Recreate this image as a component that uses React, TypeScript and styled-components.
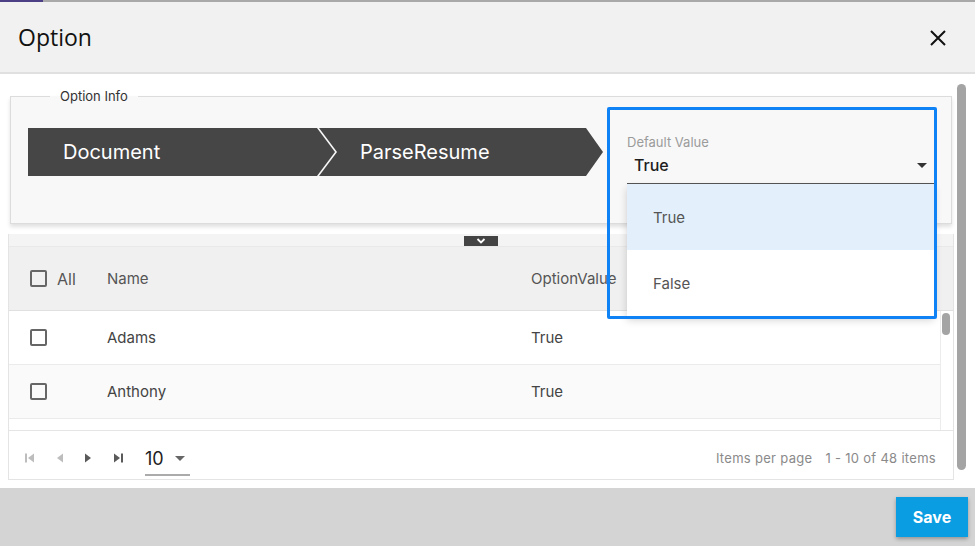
import { FC } from 'react';
import styled, { createGlobalStyle } from 'styled-components';

const GlobalStyle = createGlobalStyle`
  body {
    margin: 0;
    background: #ffffff;
    font-family: Inter, 'Open Sans', 'Liberation Sans', sans-serif;
  }
  * {
    box-sizing: border-box;
  }
`;

const Page = styled.div`
  width: 975px;
  height: 546px;
  display: flex;
  flex-direction: column;
  overflow: hidden;
`;

const TopLine = styled.div`
  height: 2px;
  flex-shrink: 0;
  background: linear-gradient(to right, #4d3f86 0 43px, #a9a9a9 43px);
`;

const Header = styled.div`
  height: 72px;
  flex-shrink: 0;
  display: flex;
  align-items: center;
  justify-content: space-between;
  padding: 0 28px 0 18px;
  background: #f1f1f1;
  border-bottom: 2px solid #e0e0e0;
`;

const Title = styled.div`
  font-family: 'Open Sans', sans-serif;
  font-size: 23px;
  color: #111;
`;

const CloseIcon = styled.svg`
  width: 18px;
  height: 18px;
  margin-top: 2px;
`;

const Body = styled.div`
  flex: 1;
  display: flex;
  min-height: 0;
`;

const Main = styled.div`
  flex: 1;
  display: flex;
  flex-direction: column;
  padding: 13px 0 0 8px;
`;

const OuterScroll = styled.div`
  width: 21px;
  flex-shrink: 0;
  padding: 10px 0 0 3px;
`;

const OuterThumb = styled.div`
  width: 9px;
  height: 386px;
  border-radius: 5px;
  background: #a4a4a4;
`;

const InfoSet = styled.fieldset`
  margin: 0 2px 0 2px;
  padding: 0 0 0 17px;
  border: 1px solid #dcdcdc;
  background: #f8f8f8;
  box-shadow: 0 3px 4px rgba(0, 0, 0, 0.12);
`;

const InfoLegend = styled.legend`
  margin-left: 22px;
  padding: 0 10px;
  font-size: 13px;
  line-height: 18px;
  color: #333;
`;

const InfoRow = styled.div`
  display: flex;
  align-items: flex-start;
  margin: 23px 0 39px;
`;

const Crumbs = styled.div`
  display: flex;
  height: 48px;
`;

const Crumb = styled.div<{ $first?: boolean; $width: number; $pad: number }>`
  width: ${p => p.$width}px;
  height: 48px;
  display: flex;
  align-items: center;
  padding-left: ${p => p.$pad}px;
  margin-left: ${p => (p.$first ? 0 : -16)}px;
  background: #464646;
  color: #fff;
  font-size: 20px;
  font-weight: 400;
  clip-path: ${p =>
    p.$first
      ? 'polygon(0 0, calc(100% - 18px) 0, 100% 50%, calc(100% - 18px) 100%, 0 100%)'
      : 'polygon(0 0, calc(100% - 17px) 0, 100% 50%, calc(100% - 17px) 100%, 0 100%, 18px 50%)'};
`;

const Field = styled.div`
  position: relative;
  width: 307px;
  margin: 6px 0 0 24px;
`;

const FieldLabel = styled.div`
  font-size: 13px;
  line-height: 16px;
  color: #9b9b9b;
`;

const FieldValue = styled.div`
  display: flex;
  align-items: center;
  justify-content: space-between;
  margin-top: 4px;
  padding: 0 7px 7px 7px;
  border-bottom: 1px solid #555;
  font-size: 16px;
  line-height: 22px;
  font-weight: 500;
  color: #1e1e1e;
`;

const Caret = styled.span<{ $color?: string }>`
  width: 0;
  height: 0;
  border-left: 5px solid transparent;
  border-right: 5px solid transparent;
  border-top: 5px solid ${p => p.$color || '#333'};
`;

const Popup = styled.div`
  position: absolute;
  top: 100%;
  left: 0;
  right: 0;
  background: #fff;
  box-shadow: 0 4px 8px rgba(0, 0, 0, 0.18);
  z-index: 2;
`;

const PopupItem = styled.div<{ $active?: boolean }>`
  height: 66px;
  display: flex;
  align-items: center;
  padding-left: 26px;
  font-size: 15px;
  color: #555;
  background: ${p => (p.$active ? '#e3f0fb' : '#fff')};
`;

const Highlight = styled.div`
  position: absolute;
  top: -27px;
  left: -20px;
  width: 330px;
  height: 212px;
  border: 3px solid #0f83f6;
  border-radius: 2px;
  pointer-events: none;
  z-index: 3;
`;

const Grid = styled.div`
  margin-top: 10px;
  height: 246px;
  display: flex;
  flex-direction: column;
  border: 1px solid #e4e4e4;
  border-top: none;
`;

const GroupStrip = styled.div`
  height: 13px;
  display: flex;
  justify-content: center;
  align-items: flex-end;
  background: #f4f4f4;
  border-bottom: 1px solid #e9e9e9;
`;

const ToggleTab = styled.div`
  width: 34px;
  height: 10px;
  display: flex;
  align-items: center;
  justify-content: center;
  background: #444;
`;

const Cols = styled.div`
  display: grid;
  grid-template-columns: 98px 424px 1fr;
  align-items: center;
`;

const HeaderRow = styled(Cols)`
  height: 64px;
  background: #f0f0f0;
  border-bottom: 1px solid #e0e0e0;
  font-size: 15px;
  color: #555;
`;

const Content = styled.div`
  flex: 1;
  display: flex;
`;

const Rows = styled.div`
  flex: 1;
  border-right: 1px solid #ececec;
`;

const Row = styled(Cols)<{ $alt?: boolean }>`
  height: 54px;
  border-bottom: 1px solid #ebebeb;
  background: ${p => (p.$alt ? '#fafafa' : '#fff')};
  font-size: 15px;
  color: #444;
`;

const Gutter = styled.div`
  width: 12px;
  padding: 2px 0 0 1px;
`;

const InnerThumb = styled.div`
  width: 8px;
  height: 22px;
  border-radius: 4px;
  background: #a4a4a4;
`;

const CheckCell = styled.div`
  display: flex;
  align-items: center;
  padding-left: 21px;
  font-size: 16px;
`;

const Checkbox = styled.span`
  width: 17px;
  height: 17px;
  margin-right: 10px;
  border: 2px solid #666;
  border-radius: 2px;
`;

const Pager = styled.div`
  height: 49px;
  display: flex;
  align-items: center;
  padding: 5px 17px 0 6px;
  border-top: 1px solid #e5e5e5;
`;

const NavButton = styled.span`
  width: 29.5px;
  display: flex;
  justify-content: center;
`;

const PageSize = styled.div`
  width: 45px;
  height: 34px;
  display: flex;
  align-items: center;
  justify-content: space-between;
  margin: 3px 0 0 12px;
  padding-right: 5px;
  border-bottom: 2px solid #ababab;
  font-size: 18px;
  color: #222;
`;

const PagerInfo = styled.div`
  margin-left: auto;
  display: flex;
  gap: 13px;
  font-size: 13px;
  letter-spacing: 0.3px;
  color: #8a8a8a;
`;

const Footer = styled.div`
  height: 58px;
  flex-shrink: 0;
  display: flex;
  justify-content: flex-end;
  align-items: flex-start;
  padding: 9px 7px 0 0;
  background: #d4d4d4;
`;

const SaveButton = styled.button`
  width: 72px;
  height: 40px;
  border: none;
  background: #0a9de2;
  color: #fff;
  font-family: Inter, sans-serif;
  font-size: 16px;
  font-weight: 700;
  box-shadow: 0 2px 4px rgba(0, 0, 0, 0.3);
`;

const NavIcon: FC<{ dir: 'first' | 'prev' | 'next' | 'last' }> = ({ dir }) => {
  const color = dir === 'first' || dir === 'prev' ? '#bdbdbd' : '#5a5a5a';
  return (
    <svg width="12" height="10" viewBox="0 0 12 10">
      {dir === 'first' && <rect x="1" y="0.5" width="2" height="9" fill={color} />}
      {(dir === 'first' || dir === 'prev') && <polygon points="10,0.5 10,9.5 4,5" fill={color} />}
      {(dir === 'next' || dir === 'last') && <polygon points="2,0.5 2,9.5 8,5" fill={color} />}
      {dir === 'last' && <rect x="9" y="0.5" width="2" height="9" fill={color} />}
    </svg>
  );
};

const people = [
  { name: 'Adams', value: 'True' },
  { name: 'Anthony', value: 'True' },
];

const App: FC = () => (
  <Page>
    <GlobalStyle />
    <TopLine />
    <Header>
      <Title>Option</Title>
      <CloseIcon viewBox="0 0 18 18">
        <path d="M2 2 L16 16 M16 2 L2 16" stroke="#111" strokeWidth="2" />
      </CloseIcon>
    </Header>
    <Body>
      <Main>
        <InfoSet>
          <InfoLegend>Option Info</InfoLegend>
          <InfoRow>
            <Crumbs>
              <Crumb $first $width={307} $pad={35}>Document</Crumb>
              <Crumb $width={284} $pad={41}>ParseResume</Crumb>
            </Crumbs>
            <Field>
              <FieldLabel>Default Value</FieldLabel>
              <FieldValue>
                True
                <Caret />
              </FieldValue>
              <Popup>
                <PopupItem $active>True</PopupItem>
                <PopupItem>False</PopupItem>
              </Popup>
              <Highlight />
            </Field>
          </InfoRow>
        </InfoSet>
        <Grid>
          <GroupStrip>
            <ToggleTab>
              <svg width="10" height="6" viewBox="0 0 10 6">
                <path d="M1.5 1 L5 4.5 L8.5 1" stroke="#fff" strokeWidth="1.8" fill="none" />
              </svg>
            </ToggleTab>
          </GroupStrip>
          <HeaderRow>
            <CheckCell>
              <Checkbox />
              All
            </CheckCell>
            <div>Name</div>
            <div>OptionValue</div>
          </HeaderRow>
          <Content>
            <Rows>
              {people.map((p, i) => (
                <Row key={p.name} $alt={i % 2 === 1}>
                  <CheckCell>
                    <Checkbox />
                  </CheckCell>
                  <div>{p.name}</div>
                  <div>{p.value}</div>
                </Row>
              ))}
            </Rows>
            <Gutter>
              <InnerThumb />
            </Gutter>
          </Content>
          <Pager>
            <NavButton><NavIcon dir="first" /></NavButton>
            <NavButton><NavIcon dir="prev" /></NavButton>
            <NavButton><NavIcon dir="next" /></NavButton>
            <NavButton><NavIcon dir="last" /></NavButton>
            <PageSize>
              10
              <Caret $color="#666" />
            </PageSize>
            <PagerInfo>
              <span>Items per page</span>
              <span>1 - 10 of 48 items</span>
            </PagerInfo>
          </Pager>
        </Grid>
      </Main>
      <OuterScroll>
        <OuterThumb />
      </OuterScroll>
    </Body>
    <Footer>
      <SaveButton>Save</SaveButton>
    </Footer>
  </Page>
);

export default App;
